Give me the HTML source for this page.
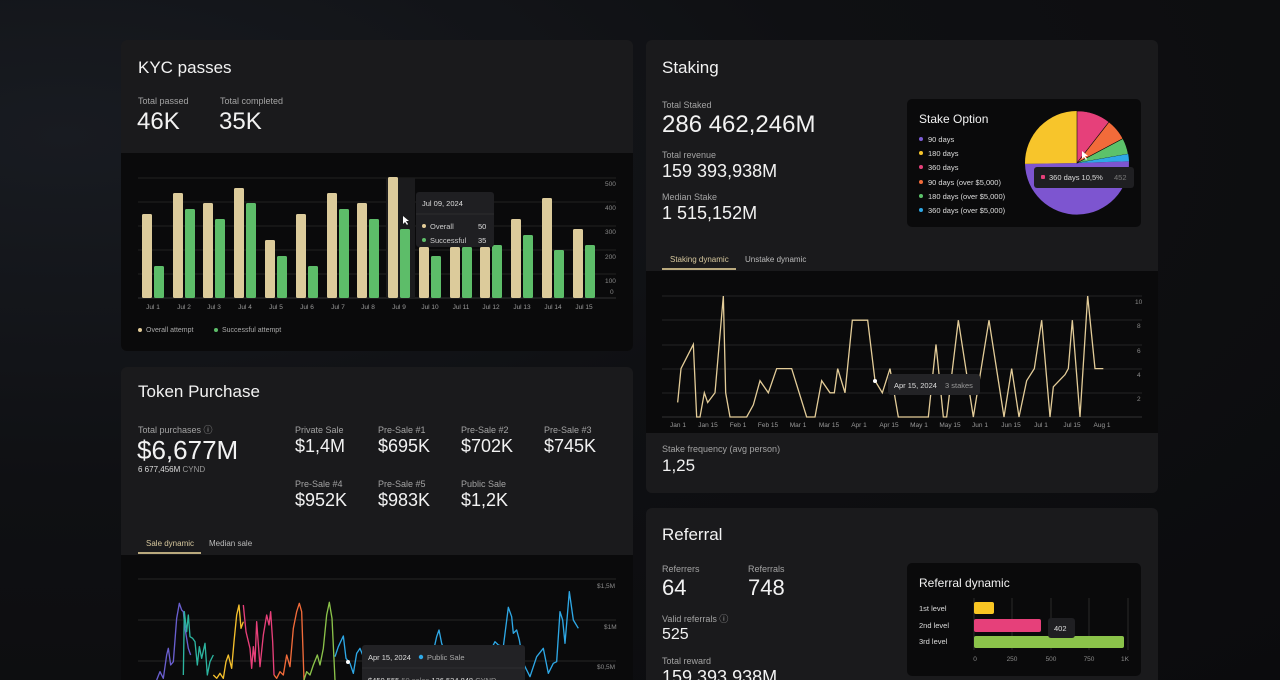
<!DOCTYPE html>
<html style="width:1280px;height:680px;overflow:hidden"><head><meta charset="utf-8"><style>
*{margin:0;padding:0;box-sizing:border-box}
body{width:1280px;height:680px;overflow:hidden;background:radial-gradient(ellipse at 5% 20%,#181b21 0%,#0f1013 45%,#0b0b0d 100%);font-family:"Liberation Sans",sans-serif;color:#f2f2f2;position:relative}
.card{position:absolute;background:#1a1a1c;border-radius:6px;overflow:hidden}
.dark{position:absolute;background:#0a0a0b}
.t{position:absolute;white-space:nowrap;line-height:1}
.lbl{font-size:9px;color:#a3a3a3}
.sm{font-size:7.5px;color:#ddd}
.d{display:inline-block;width:4px;height:4px;border-radius:50%;margin-right:5px;vertical-align:1px}
svg{position:absolute;left:0;top:0}
</style></head><body>

<div class="card" style="left:121px;top:40px;width:512px;height:311px">
 <div class="dark" style="left:0;top:113px;width:512px;height:198px"></div>
</div>
<div class="t" style="left:138px;top:59px;font-size:17px">KYC passes</div>
<div class="t lbl" style="left:138px;top:97px">Total passed</div>
<div class="t" style="left:137px;top:110px;font-size:24px">46K</div>
<div class="t lbl" style="left:220px;top:97px">Total completed</div>
<div class="t" style="left:219px;top:110px;font-size:24px">35K</div>

<div class="card" style="left:121px;top:367px;width:512px;height:313px;border-radius:6px 6px 0 0">
 <div class="dark" style="left:0;top:188px;width:512px;height:130px"></div>
</div>
<div class="t" style="left:138px;top:383px;font-size:17px">Token Purchase</div>
<div class="t lbl" style="left:138px;top:426px">Total purchases ⓘ</div>
<div class="t" style="left:137px;top:437px;font-size:26px">$6,677M</div>
<div class="t" style="left:138px;top:466px;font-size:8px;color:#ddd">6 677,456M <span style="color:#999">CYND</span></div>
<div class="t lbl" style="left:295px;top:426px">Private Sale</div><div class="t" style="left:295px;top:437px;font-size:18px">$1,4M</div>
<div class="t lbl" style="left:378px;top:426px">Pre-Sale #1</div><div class="t" style="left:378px;top:437px;font-size:18px">$695K</div>
<div class="t lbl" style="left:461px;top:426px">Pre-Sale #2</div><div class="t" style="left:461px;top:437px;font-size:18px">$702K</div>
<div class="t lbl" style="left:544px;top:426px">Pre-Sale #3</div><div class="t" style="left:544px;top:437px;font-size:18px">$745K</div>
<div class="t lbl" style="left:295px;top:480px">Pre-Sale #4</div><div class="t" style="left:295px;top:491px;font-size:18px">$952K</div>
<div class="t lbl" style="left:378px;top:480px">Pre-Sale #5</div><div class="t" style="left:378px;top:491px;font-size:18px">$983K</div>
<div class="t lbl" style="left:461px;top:480px">Public Sale</div><div class="t" style="left:461px;top:491px;font-size:18px">$1,2K</div>
<div class="t" style="left:146px;top:540px;font-size:8px;color:#d6c79d">Sale dynamic</div>
<div class="t" style="left:209px;top:540px;font-size:8px;color:#bbb">Median sale</div>
<div style="position:absolute;left:138px;top:552px;width:63px;height:2px;background:#b9a97d"></div>

<div class="card" style="left:646px;top:40px;width:512px;height:453px">
 <div class="dark" style="left:0;top:231px;width:512px;height:162px"></div>
</div>
<div class="t" style="left:662px;top:59px;font-size:17px">Staking</div>
<div class="t lbl" style="left:662px;top:101px">Total Staked</div>
<div class="t" style="left:662px;top:113px;font-size:24px">286 462,246M</div>
<div class="t lbl" style="left:662px;top:151px">Total revenue</div>
<div class="t" style="left:662px;top:162px;font-size:18px">159 393,938M</div>
<div class="t lbl" style="left:662px;top:193px">Median Stake</div>
<div class="t" style="left:662px;top:204px;font-size:18px">1 515,152M</div>
<div class="t" style="left:670px;top:256px;font-size:8px;color:#d6c79d">Staking dynamic</div>
<div class="t" style="left:745px;top:256px;font-size:8px;color:#bbb">Unstake dynamic</div>
<div style="position:absolute;left:662px;top:268px;width:74px;height:2px;background:#b9a97d"></div>
<div class="t lbl" style="left:662px;top:445px">Stake frequency (avg person)</div>
<div class="t" style="left:662px;top:457px;font-size:17px">1,25</div>

<div style="position:absolute;left:907px;top:99px;width:234px;height:128px;background:#0a0a0b;border-radius:5px"></div>
<div class="t" style="left:919px;top:113px;font-size:12px">Stake Option</div>
<div class="t sm" style="left:919px;top:136px"><span class="d" style="background:#7c5cd6"></span>90 days</div>
<div class="t sm" style="left:919px;top:150px"><span class="d" style="background:#f7c52b"></span>180 days</div>
<div class="t sm" style="left:919px;top:164px"><span class="d" style="background:#e6407a"></span>360 days</div>
<div class="t sm" style="left:919px;top:179px"><span class="d" style="background:#f26b3a"></span>90 days (over $5,000)</div>
<div class="t sm" style="left:919px;top:193px"><span class="d" style="background:#5cc26a"></span>180 days (over $5,000)</div>
<div class="t sm" style="left:919px;top:207px"><span class="d" style="background:#2ea8e6"></span>360 days (over $5,000)</div>

<div class="card" style="left:646px;top:508px;width:512px;height:172px;border-radius:6px 6px 0 0"></div>
<div class="t" style="left:662px;top:526px;font-size:17px">Referral</div>
<div class="t lbl" style="left:662px;top:565px">Referrers</div>
<div class="t" style="left:662px;top:577px;font-size:22px">64</div>
<div class="t lbl" style="left:748px;top:565px">Referrals</div>
<div class="t" style="left:748px;top:577px;font-size:22px">748</div>
<div class="t lbl" style="left:662px;top:615px">Valid referrals ⓘ</div>
<div class="t" style="left:662px;top:627px;font-size:16px">525</div>
<div class="t lbl" style="left:662px;top:657px">Total reward</div>
<div class="t" style="left:662px;top:668px;font-size:18px">159 393,938M</div>
<div style="position:absolute;left:907px;top:563px;width:234px;height:113px;background:#0a0a0b;border-radius:5px"></div>
<div class="t" style="left:919px;top:577px;font-size:12px">Referral dynamic</div>
<div class="t sm" style="left:919px;top:605px">1st level</div>
<div class="t sm" style="left:919px;top:622px">2nd level</div>
<div class="t sm" style="left:919px;top:638px">3rd level</div>

<svg width="1280" height="680" viewBox="0 0 1280 680">
 <g stroke="#222" stroke-width="1">
  <line x1="138" y1="178" x2="616" y2="178"/><line x1="138" y1="202" x2="616" y2="202"/><line x1="138" y1="226" x2="616" y2="226"/><line x1="138" y1="250" x2="616" y2="250"/><line x1="138" y1="274" x2="616" y2="274"/><line x1="138" y1="298" x2="616" y2="298" stroke="#333"/>
 </g>
 <rect x="386" y="178" width="29" height="120" fill="#1b1b1d"/>
 <g font-size="6.5" fill="#8a8a8a" font-family="Liberation Sans">
  <text x="605" y="186">500</text><text x="605" y="210">400</text><text x="605" y="234">300</text><text x="605" y="259">200</text><text x="605" y="283">100</text><text x="610" y="294">0</text>
 </g>
 <g font-size="6.5" fill="#9a9a9a" font-family="Liberation Sans" text-anchor="middle">
  <text x="153" y="309">Jul 1</text><text x="184" y="309">Jul 2</text><text x="214" y="309">Jul 3</text><text x="245" y="309">Jul 4</text><text x="276" y="309">Jul 5</text><text x="307" y="309">Jul 6</text><text x="338" y="309">Jul 7</text><text x="368" y="309">Jul 8</text><text x="399" y="309">Jul 9</text><text x="430" y="309">Jul 10</text><text x="461" y="309">Jul 11</text><text x="491" y="309">Jul 12</text><text x="522" y="309">Jul 13</text><text x="553" y="309">Jul 14</text><text x="584" y="309">Jul 15</text>
 </g>
 <circle cx="140" cy="330" r="2" fill="#e3cc98"/><text x="146" y="332" font-size="7" fill="#aaa" font-family="Liberation Sans">Overall attempt</text>
 <circle cx="216" cy="330" r="2" fill="#5dbd69"/><text x="222" y="332" font-size="7" fill="#aaa" font-family="Liberation Sans">Successful attempt</text>

 <g stroke="#242424"><line x1="662" y1="296" x2="1142" y2="296"/><line x1="662" y1="320" x2="1142" y2="320"/><line x1="662" y1="345" x2="1142" y2="345"/><line x1="662" y1="369" x2="1142" y2="369"/><line x1="662" y1="393" x2="1142" y2="393"/><line x1="662" y1="417" x2="1142" y2="417" stroke="#333"/></g>
 <g font-size="6.5" fill="#8a8a8a" font-family="Liberation Sans">
  <text x="1135" y="304">10</text><text x="1137" y="328">8</text><text x="1137" y="353">6</text><text x="1137" y="377">4</text><text x="1137" y="401">2</text>
 </g>
 <g font-size="6.5" fill="#9a9a9a" font-family="Liberation Sans" text-anchor="middle">
  <text x="678" y="427">Jan 1</text><text x="708" y="427">Jan 15</text><text x="738" y="427">Feb 1</text><text x="768" y="427">Feb 15</text><text x="798" y="427">Mar 1</text><text x="829" y="427">Mar 15</text><text x="859" y="427">Apr 1</text><text x="889" y="427">Apr 15</text><text x="919" y="427">May 1</text><text x="950" y="427">May 15</text><text x="980" y="427">Jun 1</text><text x="1011" y="427">Jun 15</text><text x="1041" y="427">Jul 1</text><text x="1072" y="427">Jul 15</text><text x="1102" y="427">Aug 1</text>
 </g>
 <g transform="translate(645,417) scale(0.33333,-12.1)">
  <polyline vector-effect="non-scaling-stroke" fill="none" stroke="#e3cc98" stroke-width="1.3" points="98,1.2 108,4 145,6 155,0 165,0 178,2 188,1.2 210,2 235,10 242,2 255,0 305,0 325,1 345,3 370,2 395,4 440,4 485,0 510,0 530,3 555,2 568,2 578,4 600,2 622,8 668,8 690,3 712,2 735,4 760,0 850,0 873,6 895,0 905,0 940,8 985,0 1032,8 1077,0 1100,4 1122,0 1145,3 1168,4 1190,8 1215,0 1225,2.5 1260,3.5 1270,4 1282,8 1305,0 1328,10 1350,4 1375,4"/>
 </g>
 <rect x="888" y="374" width="92" height="21" rx="3" fill="#232326"/>
 <text x="894" y="388" font-size="7.5" fill="#ddd" font-family="Liberation Sans">Apr 15, 2024</text>
 <text x="945" y="388" font-size="7.5" fill="#999" font-family="Liberation Sans">3 stakes</text>
 <circle cx="875" cy="381" r="2" fill="#fff"/>

 <g stroke="#262626"><line x1="138" y1="579" x2="616" y2="579"/><line x1="138" y1="620" x2="616" y2="620"/><line x1="138" y1="661" x2="616" y2="661"/></g>
 <g font-size="6.5" fill="#8a8a8a" font-family="Liberation Sans">
  <text x="597" y="588">$1,5M</text><text x="604" y="629">$1M</text><text x="597" y="669">$0,5M</text>
 </g>
 <g transform="translate(120,575) scale(0.33333)" fill="none" stroke-width="4" stroke-linejoin="round">
  <polyline stroke="#6a5fd0" points="110,315 120,290 130,310 140,240 145,220 152,270 160,260 170,130 178,85 185,105 190,110 195,160 205,220 212,240"/>
  <polyline stroke="#2cb5a0" points="190,300 193,110 200,170 205,120 210,185 218,190 225,200 232,270 238,215 245,250 255,205 262,300 270,260 280,240"/>
  <polyline stroke="#f5c02c" points="280,300 290,310 300,295 310,310 318,260 325,240 335,280 342,200 350,120 357,90 363,160 370,140"/>
  <polyline stroke="#e8407a" points="370,90 378,170 390,220 395,280 400,215 405,260 410,140 420,275 430,180 440,120 447,150 452,110 458,200 462,300"/>
  <polyline stroke="#f26b3a" points="462,300 470,310 480,290 490,300 500,240 510,275 520,160 530,110 538,85 545,110 552,315"/>
  <polyline stroke="#8bc34a" points="552,315 560,290 570,300 580,270 592,240 600,270 610,220 620,120 628,82 636,130 645,315"/>
  <polyline stroke="#2ea8e6" points="645,245 655,215 670,183 678,250 690,265 700,295 710,235 720,220 730,245 760,330 800,300 850,330 900,280 940,230 950,185 957,165 965,205 1000,300 1050,280 1100,250 1125,200 1135,210 1150,215 1165,97 1175,125 1180,175 1190,165 1198,195 1210,265 1230,305 1250,245 1270,220 1285,295 1300,265 1310,260 1320,110 1328,135 1335,205 1348,50 1360,135 1375,160"/>
 </g>
 <rect x="362" y="645" width="163" height="45" rx="3" fill="#222225"/>
 <line x1="362" y1="668" x2="525" y2="668" stroke="#2e2e31"/>
 <text x="368" y="660" font-size="7.5" fill="#ddd" font-family="Liberation Sans">Apr 15, 2024</text>
 <circle cx="421" cy="657" r="2.2" fill="#2ea8e6"/>
 <text x="427" y="660" font-size="7.5" fill="#aaa" font-family="Liberation Sans">Public Sale</text>
 <text x="368" y="683" font-size="7.5" fill="#ddd" font-family="Liberation Sans">$450 555   <tspan fill="#888">50 sales</tspan>   136 534,848 <tspan fill="#999">CYND</tspan></text>
 <circle cx="348" cy="662" r="2" fill="#fff"/>

 <path d="M1077 163 L1129 161.2 A52 52 0 1 1 1025 163.9 Z" fill="#7d55d0"/>
 <path d="M1077 163 L1025 163.9 A52 52 0 0 1 1077 111 Z" fill="#f7c52b"/>
 <path d="M1077 163 L1077 111 A52 52 0 0 1 1109 122 Z" fill="#e6407a" stroke="#0a0a0b" stroke-width=".6"/>
 <path d="M1077 163 L1109 122 A52 52 0 0 1 1122.9 138.6 Z" fill="#f26b3a" stroke="#0a0a0b" stroke-width=".6"/>
 <path d="M1077 163 L1122.9 138.6 A52 52 0 0 1 1128.2 154 Z" fill="#5cc26a" stroke="#0a0a0b" stroke-width=".6"/>
 <path d="M1077 163 L1128.2 154 A52 52 0 0 1 1129 161.2 Z" fill="#2ea8e6"/>
 <rect x="1034" y="167" width="100" height="21" rx="3" fill="#1f1f22"/>
 <rect x="1041" y="175" width="4" height="4" rx="1" fill="#e6407a"/>
 <text x="1049" y="180" font-size="7.5" fill="#ddd" font-family="Liberation Sans">360 days   10,5%</text>
 <text x="1114" y="180" font-size="7.5" fill="#777" font-family="Liberation Sans">452</text>
 <path d="M1082 151 l0 8 l2 -2 l2 3 l1 -1 l-2 -3 l3 0 z" fill="#fff"/>

 <g stroke="#2a2a2a"><line x1="974" y1="598" x2="974" y2="650"/><line x1="1012" y1="598" x2="1012" y2="650"/><line x1="1051" y1="598" x2="1051" y2="650"/><line x1="1089" y1="598" x2="1089" y2="650"/><line x1="1128" y1="598" x2="1128" y2="650"/></g>
 <rect x="974" y="602" width="20" height="12" rx="2" fill="#f9c623"/>
 <rect x="974" y="619" width="67" height="13" rx="2" fill="#e6407a"/>
 <rect x="974" y="636" width="150" height="12" rx="2" fill="#8bc34a"/>
 <rect x="1048" y="618" width="27" height="20" rx="3" fill="#1f1f22"/>
 <text x="1054" y="631" font-size="7.5" fill="#ddd" font-family="Liberation Sans">402</text>
 <g font-size="6.5" fill="#8a8a8a" font-family="Liberation Sans" text-anchor="middle"><text x="975" y="661">0</text><text x="1012" y="661">250</text><text x="1051" y="661">500</text><text x="1089" y="661">750</text><text x="1125" y="661">1K</text></g>

 <g fill="#dccb9b">
  <rect x="142" y="214" width="10" height="84" rx="1.5"/><rect x="173" y="193" width="10" height="105" rx="1.5"/><rect x="203" y="203" width="10" height="95" rx="1.5"/><rect x="234" y="188" width="10" height="110" rx="1.5"/><rect x="265" y="240" width="10" height="58" rx="1.5"/><rect x="296" y="214" width="10" height="84" rx="1.5"/><rect x="327" y="193" width="10" height="105" rx="1.5"/><rect x="357" y="203" width="10" height="95" rx="1.5"/><rect x="388" y="177" width="10" height="121" rx="1.5"/><rect x="419" y="247" width="10" height="51" rx="1.5"/><rect x="450" y="247" width="10" height="51" rx="1.5"/><rect x="480" y="247" width="10" height="51" rx="1.5"/><rect x="511" y="219" width="10" height="79" rx="1.5"/><rect x="542" y="198" width="10" height="100" rx="1.5"/><rect x="573" y="229" width="10" height="69" rx="1.5"/>
 </g>
 <g fill="#5dbd69">
  <rect x="154" y="266" width="10" height="32" rx="1.5"/><rect x="185" y="209" width="10" height="89" rx="1.5"/><rect x="215" y="219" width="10" height="79" rx="1.5"/><rect x="246" y="203" width="10" height="95" rx="1.5"/><rect x="277" y="256" width="10" height="42" rx="1.5"/><rect x="308" y="266" width="10" height="32" rx="1.5"/><rect x="339" y="209" width="10" height="89" rx="1.5"/><rect x="369" y="219" width="10" height="79" rx="1.5"/><rect x="400" y="229" width="10" height="69" rx="1.5"/><rect x="431" y="256" width="10" height="42" rx="1.5"/><rect x="462" y="247" width="10" height="51" rx="1.5"/><rect x="492" y="245" width="10" height="53" rx="1.5"/><rect x="523" y="235" width="10" height="63" rx="1.5"/><rect x="554" y="250" width="10" height="48" rx="1.5"/><rect x="585" y="245" width="10" height="53" rx="1.5"/>
 </g>
 <rect x="416" y="192" width="78" height="55" rx="3" fill="#1f1f22"/>
 <line x1="416" y1="214" x2="494" y2="214" stroke="#2c2c2f"/>
 <text x="422" y="206" font-size="7.5" fill="#ddd" font-family="Liberation Sans">Jul 09, 2024</text>
 <circle cx="424" cy="226" r="2" fill="#e3cc98"/><text x="430" y="229" font-size="7.5" fill="#ccc" font-family="Liberation Sans">Overall</text><text x="478" y="229" font-size="7.5" fill="#ddd" font-family="Liberation Sans">50</text>
 <circle cx="424" cy="240" r="2" fill="#5dbd69"/><text x="430" y="243" font-size="7.5" fill="#ccc" font-family="Liberation Sans">Successful</text><text x="478" y="243" font-size="7.5" fill="#ddd" font-family="Liberation Sans">35</text>
 <path d="M403 216 l0 8 l2 -2 l2 3 l1 -1 l-2 -3 l3 0 z" fill="#fff"/>
</svg>
</body></html>
